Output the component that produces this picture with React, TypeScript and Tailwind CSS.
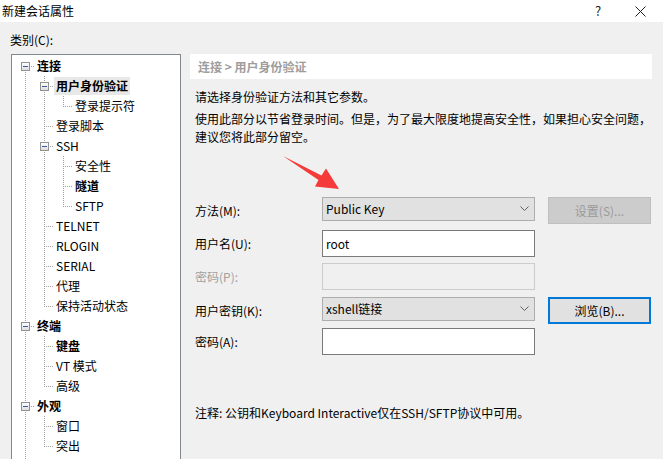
import type { ReactNode } from "react";

type Node = { text: string; level: number; box?: boolean; bold?: boolean; selected?: boolean };

const nodes: Node[] = [
  { text: "连接", level: 0, box: true, bold: true },
  { text: "用户身份验证", level: 1, box: true, bold: true, selected: true },
  { text: "登录提示符", level: 2 },
  { text: "登录脚本", level: 1 },
  { text: "SSH", level: 1, box: true },
  { text: "安全性", level: 2 },
  { text: "隧道", level: 2, bold: true },
  { text: "SFTP", level: 2 },
  { text: "TELNET", level: 1 },
  { text: "RLOGIN", level: 1 },
  { text: "SERIAL", level: 1 },
  { text: "代理", level: 1 },
  { text: "保持活动状态", level: 1 },
  { text: "终端", level: 0, box: true, bold: true },
  { text: "键盘", level: 1, bold: true },
  { text: "VT 模式", level: 1 },
  { text: "高级", level: 1 },
  { text: "外观", level: 0, box: true, bold: true },
  { text: "窗口", level: 1 },
  { text: "突出", level: 1 },
];

const indent: Record<number, string> = { 0: "pl-[25px]", 1: "pl-[44px]", 2: "pl-[63px]" };

const cy = (i: number) => 11 + 20 * i;
const cx = (l: number) => 13 + 19 * l;

function TreeLines() {
  const segs: ReactNode[] = [];
  // vertical lines: for each node with children, from first child top to last child center
  nodes.forEach((n, i) => {
    if (!n.box) return;
    let last = -1;
    for (let j = i + 1; j < nodes.length && nodes[j].level > n.level; j++) {
      if (nodes[j].level === n.level + 1) last = j;
    }
    if (last > 0) {
      const x = cx(n.level + 1) + 0.5;
      segs.push(<line key={"v" + i} x1={x} x2={x} y1={cy(i) + 10} y2={cy(last) + 1} />);
    }
  });
  // root line
  segs.push(<line key="root" x1={cx(0) + 0.5} x2={cx(0) + 0.5} y1={cy(0)} y2={420} />);
  // horizontals
  nodes.forEach((n, i) => {
    const y = cy(i) + 0.5;
    segs.push(<line key={"h" + i} x1={cx(n.level)} x2={cx(n.level) + 10} y1={y} y2={y} />);
  });
  return (
    <svg className="absolute left-0 top-0 pointer-events-none" width="168" height="410">
      <g stroke="#a0a0a0" strokeWidth="1" strokeDasharray="1 1">{segs}</g>
      <defs>
        <linearGradient id="bx" x1="0" y1="0" x2="0" y2="1">
          <stop offset="0" stopColor="#ffffff" />
          <stop offset="1" stopColor="#dcdcdc" />
        </linearGradient>
      </defs>
      {nodes.map((n, i) =>
        n.box ? (
          <g key={"b" + i}>
            <rect x={cx(n.level) - 4 + 0.5} y={cy(i) - 4 + 0.5} width="8" height="8" fill="url(#bx)" stroke="#919191" />
            <line x1={cx(n.level) - 2} x2={cx(n.level) + 3} y1={cy(i) + 0.5} y2={cy(i) + 0.5} stroke="#3b5b9a" />
          </g>
        ) : null
      )}
    </svg>
  );
}

function Chevron() {
  return (
    <svg width="9" height="6" viewBox="0 0 9 6" className="mr-[5px]">
      <polyline points="0.5,0.5 4.5,4.5 8.5,0.5" fill="none" stroke="#606060" strokeWidth="1" />
    </svg>
  );
}

export default function App() {
  return (
    <div className="relative w-[663px] h-[459px] overflow-hidden flex flex-col bg-[#f0f0f0] text-[12px] text-black font-['Microsoft_YaHei','Noto_Sans_CJK_SC',sans-serif] leading-[18px]">
      {/* title bar */}
      <div className="h-[22px] shrink-0 bg-white flex items-center pl-[2px]">
        <span className="flex-1">新建会话属性</span>
        <span className="w-[10px] text-[13px] mr-[30px] text-[#222]">?</span>
        <svg width="11" height="11" className="mr-[17px]">
          <line x1="0.5" y1="0.5" x2="10.5" y2="10.5" stroke="#222" />
          <line x1="10.5" y1="0.5" x2="0.5" y2="10.5" stroke="#222" />
        </svg>
      </div>

      <div className="pl-[10px] pt-[9px] h-[32px] shrink-0">类别(C):</div>

      <div className="flex flex-1 pl-[11px]">
        {/* tree */}
        <div className="relative w-[170px] border border-b-0 border-[#828790] bg-white pt-[1px]">
          <TreeLines />
          {nodes.map((n, i) => (
            <div key={i} className={"relative h-[20px] flex items-center " + indent[n.level]}>
              <span
                className={
                  "-ml-[2px] px-[2px] h-[18px] flex items-center whitespace-nowrap " +
                  (n.bold ? "font-bold " : "") +
                  (n.selected ? "bg-[#e8e8e8]" : "")
                }
              >
                {n.text}
              </span>
            </div>
          ))}
        </div>

        {/* right panel */}
        <div className="ml-[9px] w-[462px] flex flex-col">
          <div className="h-[25px] bg-white flex items-center pl-[8px] text-[#9d9d9d] font-bold">连接 &gt; 用户身份验证</div>
          <div className="pl-[5px] mt-[9px]">请选择身份验证方法和其它参数。</div>
          <div className="pl-[5px] mt-[4px] whitespace-nowrap">
            使用此部分以节省登录时间。但是，为了最大限度地提高安全性，如果担心安全问题，
            <br />
            建议您将此部分留空。
          </div>

          <div className="mt-[51px] flex items-start">
            <div className="w-[132px] h-[27px] pl-[5px] flex items-center">方法(M):</div>
            <div className="w-[213px] h-[24px] bg-[#e1e1e1] border border-[#adadad] flex items-center justify-between pl-[3px]">
              <span>Public Key</span>
              <Chevron />
            </div>
            <div className="ml-[13px] w-[103px] h-[27px] bg-[#cccccc] border border-[#bfbfbf] flex items-center justify-center text-[#9a9a9a]">
              设置(S)...
            </div>
          </div>

          <div className="mt-[6px] flex items-start">
            <div className="w-[132px] h-[27px] pl-[5px] flex items-center">用户名(U):</div>
            <div className="w-[213px] h-[27px] bg-white border border-[#7a7a7a] flex items-center pl-[3px]">root</div>
          </div>

          <div className="mt-[6px] flex items-start">
            <div className="w-[132px] h-[27px] pl-[5px] flex items-center text-[#a0a0a0]">密码(P):</div>
            <div className="w-[213px] h-[27px] bg-[#f0f0f0] border border-[#cccccc]" />
          </div>

          <div className="mt-[7px] flex items-start">
            <div className="w-[132px] h-[27px] pl-[5px] flex items-center">用户密钥(K):</div>
            <div className="w-[213px] h-[24px] bg-[#e1e1e1] border border-[#adadad] flex items-center justify-between pl-[3px]">
              <span>xshell链接</span>
              <Chevron />
            </div>
            <div className="ml-[13px] w-[103px] h-[27px] bg-[#e1e1e1] border-2 border-[#0078d7] flex items-center justify-center">
              浏览(B)...
            </div>
          </div>

          <div className="mt-[4px] flex items-start">
            <div className="w-[132px] h-[27px] pl-[5px] flex items-center">密码(A):</div>
            <div className="w-[213px] h-[27px] bg-white border border-[#7a7a7a]" />
          </div>

          <div className="pl-[5px] mt-[49px] whitespace-nowrap">注释: 公钥和Keyboard Interactive仅在SSH/SFTP协议中可用。</div>
        </div>
      </div>

      {/* red annotation arrow */}
      <svg className="absolute left-0 top-0 pointer-events-none" width="663" height="459">
        <polygon
          points="283,156 321.5,175.5 326,168.5 339,189 315,186.5 318.5,180"
          fill="#f53a3a"
        />
      </svg>
    </div>
  );
}
